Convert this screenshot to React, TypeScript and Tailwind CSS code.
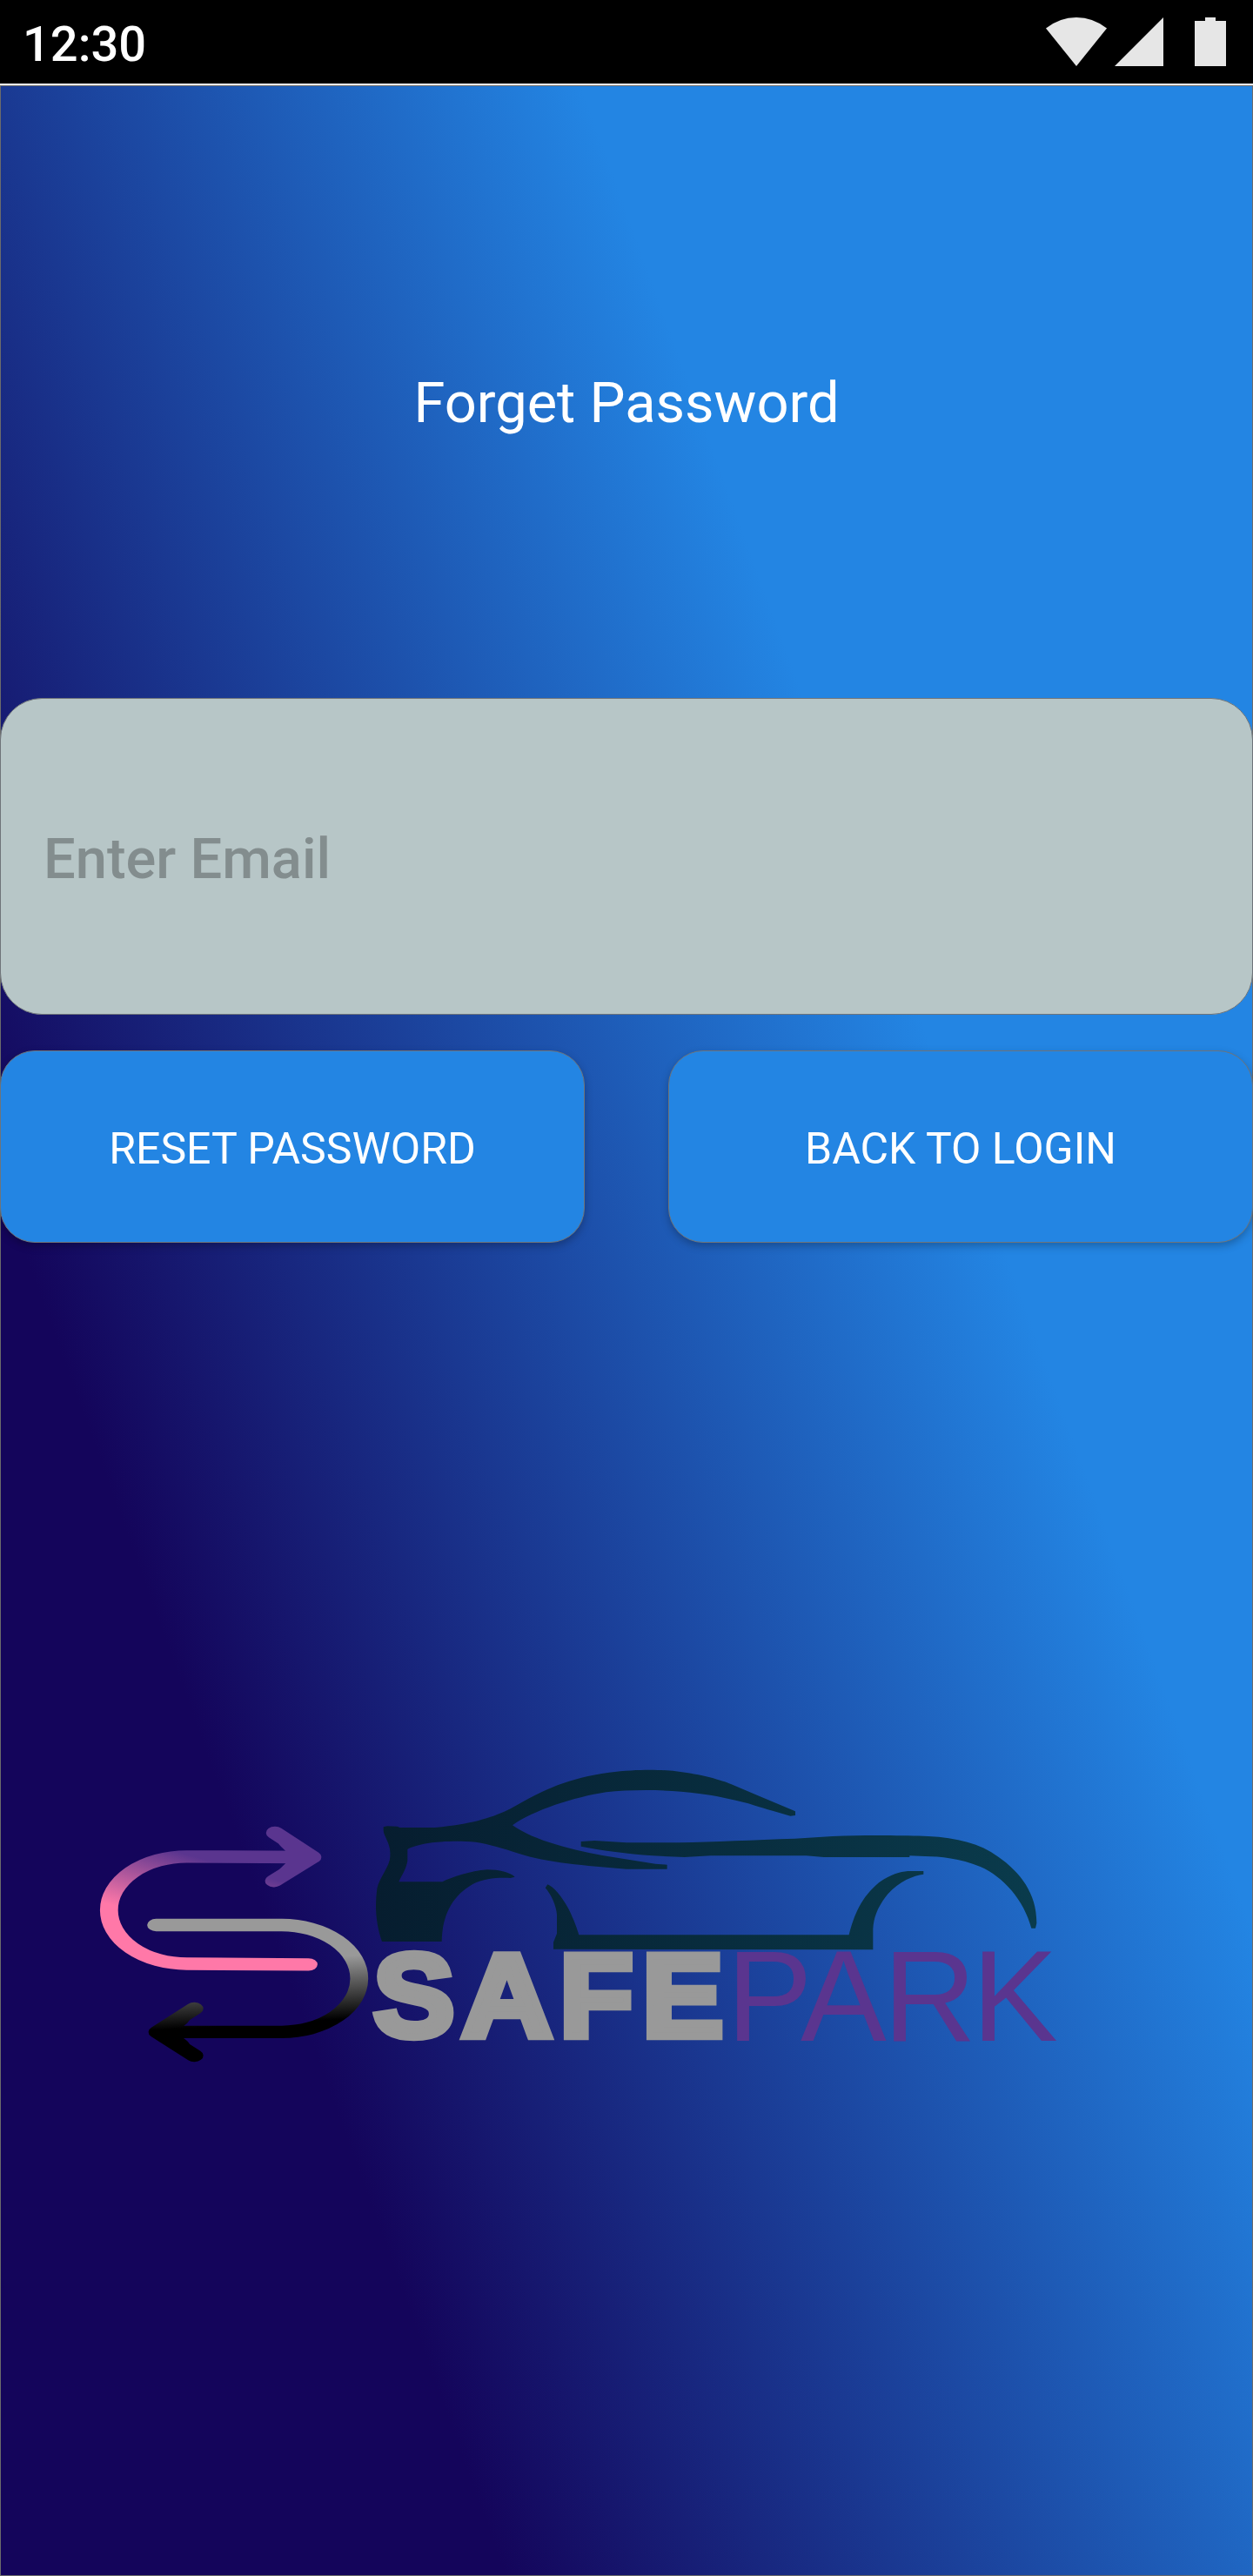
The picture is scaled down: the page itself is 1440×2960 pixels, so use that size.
import React from "react";

function StatusBar() {
  return (
    <header className="flex h-24 shrink-0 items-center justify-between bg-black pl-[26px] pr-[31px] text-white">
      <span className="pt-1.5 text-[56px] leading-none font-medium">12:30</span>
      <svg className="h-14 w-[208px]" viewBox="1201 20 208 56" fill="#e6e6e6">
        <path d="M1202 32.5Q1218 20 1237 20T1272 32.5L1237 76Z" />
        <path d="M1281 76L1337 20V76Z" />
        <path d="M1373 24H1385V20H1397V24H1409V76H1373Z" />
      </svg>
    </header>
  );
}

function ActionButton({ children }: { children: React.ReactNode }) {
  return (
    <button className="flex h-[221px] w-[672px] items-center justify-center rounded-[40px] border border-[#6f7479] bg-[#2385e3] pt-1 text-[50px] leading-none whitespace-nowrap text-white shadow-[0_4px_10px_rgba(0,0,0,0.25)]">
      {children}
    </button>
  );
}

function Logo() {
  return (
    <svg className="mt-[582px] ml-[99px] h-[390px] w-[1140px] shrink-0" viewBox="100 2010 1140 390" role="img" aria-label="SafePark">
      <defs>
        <linearGradient id="pink" gradientUnits="userSpaceOnUse" x1="82.8" y1="2186.7" x2="111.7" y2="2116">
          <stop offset="0" stopColor="#ff78a8" />
          <stop offset="1" stopColor="#5a358f" />
        </linearGradient>
        <linearGradient id="gray" gradientUnits="userSpaceOnUse" x1="220" y1="2252" x2="226" y2="2324">
          <stop offset="0" stopColor="#999999" />
          <stop offset="1" stopColor="#000000" />
        </linearGradient>
        <linearGradient id="car" gradientUnits="userSpaceOnUse" x1="100" y1="0" x2="2374" y2="0">
          <stop offset="0" stopColor="#061d2f" />
          <stop offset="1" stopColor="#0a3b4c" />
        </linearGradient>
      </defs>
      <g transform="scale(1.45 1)" fill="none" strokeWidth="14.3" strokeLinecap="round" strokeLinejoin="round">
        <g stroke="url(#pink)">
          <path d="M244.5 2257.3L148 2256.5A61.5 61.5 0 0 1 148 2133.3L246 2134" />
          <path d="M218 2106L247.6 2134L217.2 2161.3" />
          <path d="M228 2117L240 2134L228 2151" />
        </g>
        <g stroke="url(#gray)">
          <path d="M123.8 2212H223.3A61.4 61.4 0 0 1 223.3 2334.8H127" />
          <path d="M154 2308L124.8 2335L154 2362" />
          <path d="M143 2320L130 2335L143 2350" />
        </g>
      </g>
      <g transform="translate(400 2010) scale(0.33333)" fill="url(#car)">
        <path d="M122 268L135 265L170 266L178 270H300C430 258 500 235 560 205C680 135 760 100 900 80C1000 68 1080 70 1130 76C1220 86 1290 108 1320 120L1410 158L1542 214V228L1525 230C1460 212 1430 203 1380 187C1320 172 1270 160 1210 153C1100 138 980 138 890 148C780 165 640 210 567 262C640 315 780 350 900 370L1060 395L1100 398V413H960C820 402 680 390 590 360C530 340 490 328 440 320C380 315 320 318 290 322C250 328 220 336 205 345V385C200 415 185 435 175 457H325C360 440 420 420 480 415C520 415 560 425 575 440L560 444C520 442 470 444 430 465C360 505 325 570 323 663H117C95 600 92 540 100 480C108 440 148 400 145 365C148 325 122 300 122 280Z" />
        <path d="M680 478L688 466C710 475 735 505 760 550C780 590 790 620 796 640H1727C1745 570 1770 510 1830 460C1870 430 1910 420 1940 420H1984V431C1950 435 1900 455 1860 500C1825 545 1812 580 1810 620V691L708 689V665L720 635V570C718 540 700 500 680 478Z" />
        <path d="M803 318L850 315L960 322H1140C1260 320 1400 312 1540 308L1670 300C1800 295 1920 298 2000 300C2100 305 2180 325 2240 370C2320 425 2375 500 2374 600L2370 617H2356C2330 520 2260 440 2180 405C2110 375 2040 370 1990 369L1936 367V372H1640L1580 367H1250L1160 372L1050 367C960 360 880 350 803 335Z" />
      </g>
      <g className="font-['Liberation_Sans',sans-serif]">
        <g className="font-bold" fontSize="136" fill="#999999" stroke="#999999" strokeWidth="8.6" strokeMiterlimit="3">
          <text transform="translate(429 2340.2) scale(1.03 1)">S</text>
          <text transform="translate(530.5 2340.2) scale(1.06 1)">A</text>
          <text transform="translate(643 2340.2) scale(1.02 1)">F</text>
          <text transform="translate(738 2340.2) scale(1.03 1)">E</text>
        </g>
        <text x="835 920 1015 1117" y="2344.5" fontSize="148" fill="#5a358f">PARK</text>
      </g>
    </svg>
  );
}

export default function App() {
  return (
    <div className="flex h-[2960px] w-[1440px] flex-col overflow-hidden bg-white font-[Roboto,sans-serif]">
      <StatusBar />
      <main className="mt-0.5 flex flex-1 flex-col border border-[#6b6b6b] bg-[linear-gradient(70deg,#14055b_23.4%,#2385e3_68.9%)]">
        <h1 className="mt-[332px] text-center text-[65px] leading-[64px] text-white">Forget Password</h1>
        <div className="-mx-px mt-[307px] flex h-[364px] items-center rounded-[48px] border border-[#6f7479] bg-[#b7c6c7]">
          <input
            className="w-full bg-transparent pt-2 pl-[49px] text-[65px] font-medium text-[#838d8e] outline-none placeholder:text-[#838d8e]"
            placeholder="Enter Email"
          />
        </div>
        <div className="-mx-px mt-[41px] flex justify-between">
          <ActionButton>RESET PASSWORD</ActionButton>
          <ActionButton>BACK TO LOGIN</ActionButton>
        </div>
        <Logo />
      </main>
    </div>
  );
}
